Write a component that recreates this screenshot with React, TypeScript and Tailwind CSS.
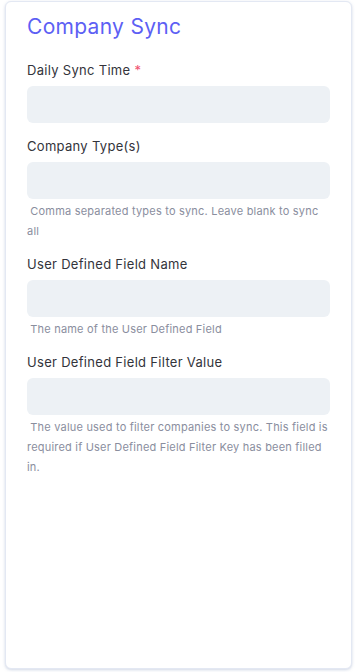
import React from "react";

type Field = {
  label: string;
  required?: boolean;
  help?: string;
};

const fields: Field[] = [
  { label: "Daily Sync Time", required: true },
  {
    label: "Company Type(s)",
    help: "Comma separated types to sync. Leave blank to sync all",
  },
  { label: "User Defined Field Name", help: "The name of the User Defined Field" },
  {
    label: "User Defined Field Filter Value",
    help: "The value used to filter companies to sync. This field is required if User Defined Field Filter Key has been filled in.",
  },
];

export default function App() {
  return (
    <div
      className="w-[356px] h-[672px] bg-white pl-[5px] pr-[4px] pt-[1px] pb-[3px]"
      style={{ fontFamily: "Inter, 'Noto Sans', sans-serif" }}
    >
      <div className="h-full rounded-md border border-[#e3e8f3] bg-white shadow-[0_1px_3px_rgba(120,140,180,0.35)] px-[21px] pt-[11px]">
        {/* Title */}
        <h1 className="text-[21px] leading-7 tracking-[0.3px] text-[#5d5ff4] mb-[19px]">
          Company Sync
        </h1>

        {fields.map((f) => (
          <div key={f.label} className="mb-[13px]">
            <label className="block text-[13px] leading-5 tracking-[0.3px] text-[#33343b] mb-[6px]">
              {f.label}
              {f.required && <span className="text-[#f0506e]"> *</span>}
            </label>
            <div className="h-[37px] w-full rounded-md bg-[#edf1f5]" />
            {f.help && (
              <p className="mt-[2px] text-[11px] leading-5 tracking-[0.2px] text-[#8a8e9e]">
                &nbsp;{f.help}
              </p>
            )}
          </div>
        ))}
      </div>
    </div>
  );
}
